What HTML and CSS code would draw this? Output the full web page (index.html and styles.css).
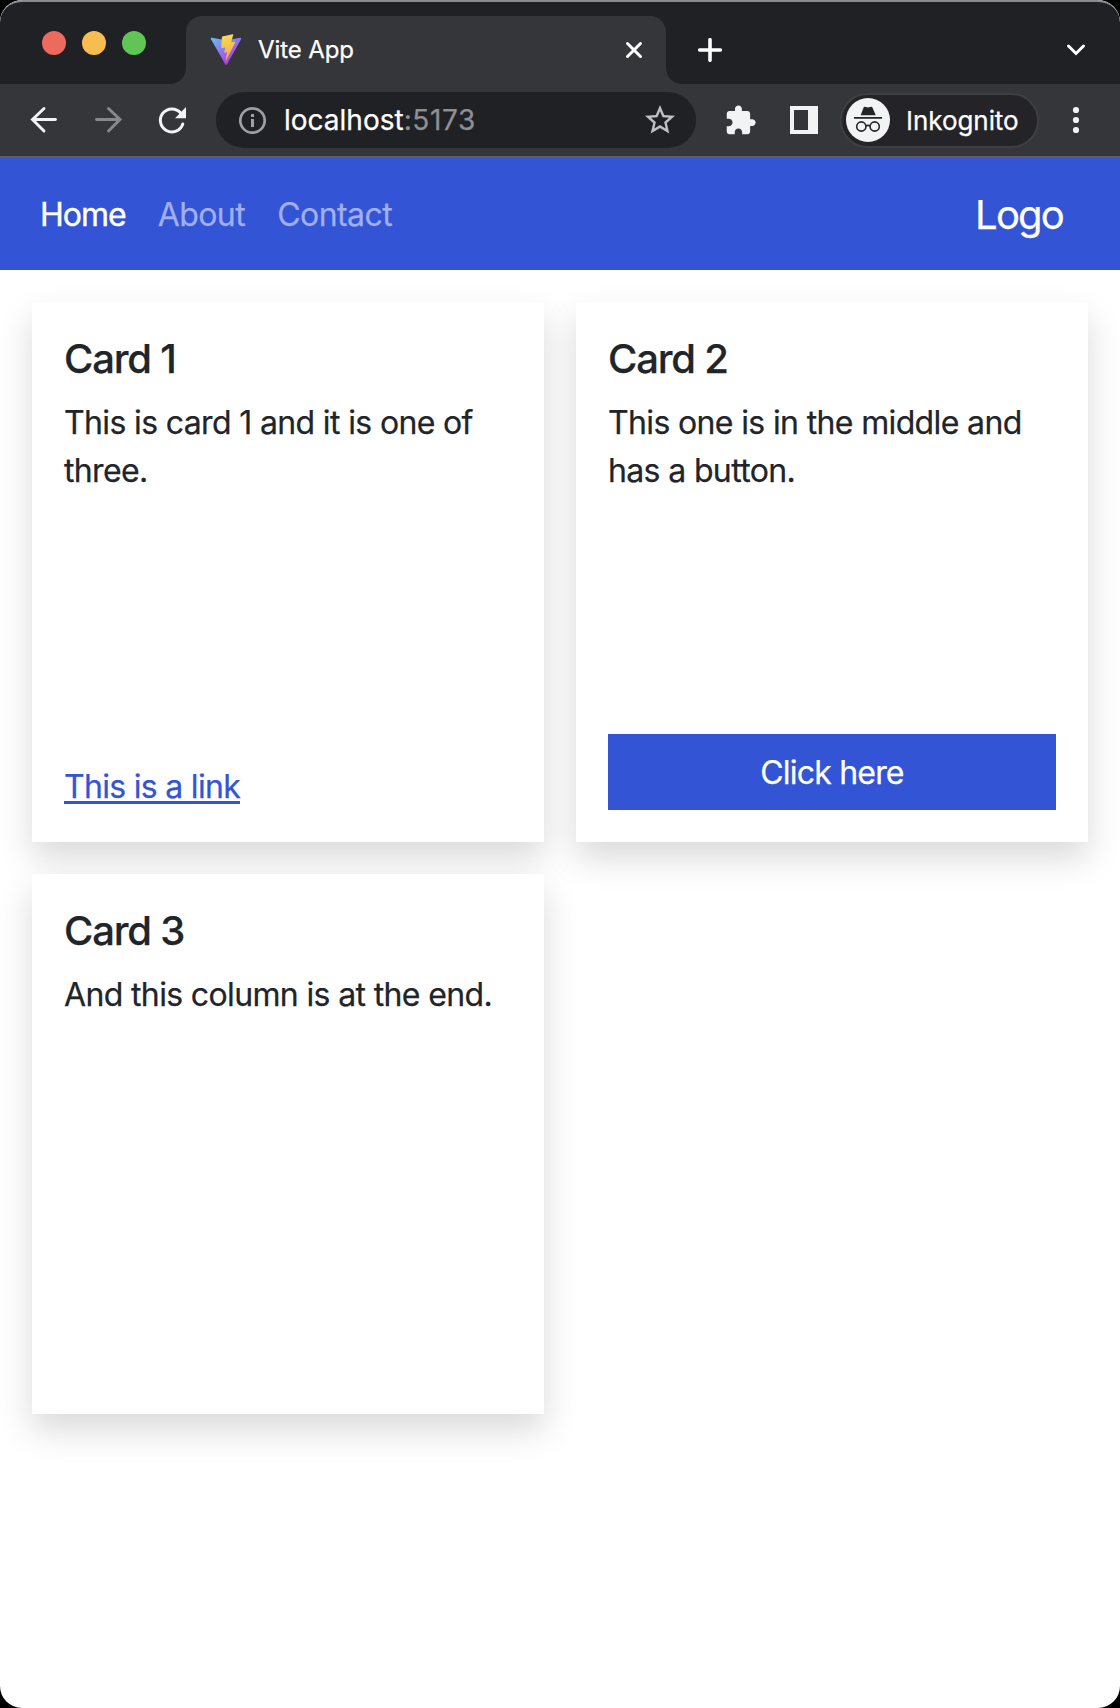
FILE: index.html
```html
<!DOCTYPE html>
<html lang="en">
<head>
<meta charset="utf-8">
<title>Vite App</title>
<link rel="stylesheet" href="styles.css">
</head>
<body>
<div class="window">
  <div class="tabstrip">
    <div class="lights"><span class="light red"></span><span class="light yellow"></span><span class="light green"></span></div>
    <div class="tab">
      <svg class="favicon" viewBox="0 0 410 404">
        <defs>
          <linearGradient id="shield" x1="6" y1="33" x2="235" y2="344" gradientUnits="userSpaceOnUse"><stop stop-color="#5fc4f5"/><stop offset="1" stop-color="#b044ea"/></linearGradient>
          <linearGradient id="bolt" x1="194.651" y1="8.818" x2="236.076" y2="292.989" gradientUnits="userSpaceOnUse"><stop stop-color="#f8e084"/><stop offset=".083" stop-color="#f9d657"/><stop offset="1" stop-color="#f3ae3d"/></linearGradient>
        </defs>
        <path fill="url(#shield)" d="M399.641 59.5246L215.643 388.545C211.844 395.338 202.084 395.378 198.228 388.618L10.5817 59.5563C6.38087 52.1896 12.6802 43.2665 21.0281 44.7586L205.223 77.6824C206.398 77.8924 207.601 77.8904 208.776 77.6763L389.119 44.8058C397.439 43.2894 403.768 52.1434 399.641 59.5246Z"/>
        <path fill="url(#bolt)" d="M292.965 1.5744L156.801 28.2552C154.563 28.6937 152.906 30.5903 152.771 32.8664L144.395 174.33C144.198 177.662 147.258 180.248 150.51 179.498L188.42 170.749C191.967 169.931 195.172 173.055 194.443 176.622L183.18 231.775C182.422 235.487 185.907 238.661 189.532 237.56L212.947 230.446C216.577 229.344 220.065 232.527 219.297 236.242L201.398 322.875C200.278 328.294 207.486 331.249 210.492 326.603L212.5 323.5L323.454 102.072C325.312 98.3645 322.108 94.137 318.036 94.9228L279.014 102.454C275.347 103.161 272.227 99.746 273.262 96.1583L298.731 7.86689C299.767 4.27314 296.636 0.855181 292.965 1.5744Z"/>
      </svg>
      <span class="tab-title">Vite App</span>
      <svg class="tab-close" viewBox="0 0 20 20"><path d="M3.5 3.5l13 13M16.5 3.5l-13 13" stroke="#fff" stroke-width="3" stroke-linecap="round"/></svg>
    </div>
    <svg class="new-tab" viewBox="0 0 24 24"><path d="M12 1.7v20.6M1.7 12h20.6" stroke="#fff" stroke-width="3.6" stroke-linecap="round"/></svg>
    <svg class="tab-search" viewBox="0 0 20 12"><path d="M2.5 2l7.5 7.5L17.500 2" fill="none" stroke="#fff" stroke-width="3" stroke-linecap="round"/></svg>
  </div>

  <div class="toolbar">
    <div class="nav-buttons">
      <svg viewBox="0 0 32 32" fill="none" stroke="#f1f3f4" stroke-width="2.9" stroke-linecap="round"><path d="M27.500 15.500H5M16 4.500L4.500 15.500L16 27"/></svg>
      <svg viewBox="0 0 32 32" fill="none" stroke="#88898c" stroke-width="2.9" stroke-linecap="round"><path d="M4.500 15.500H27M16.500 4.500L28 15.500L16.500 27"/></svg>
      <svg viewBox="0 0 32 32"><path d="M24.700 9A11.500 11.500 0 1 0 26.800 20" fill="none" stroke="#f1f3f4" stroke-width="3"  stroke-linecap="round"/><path d="M30 3v11.300H19z" fill="#f1f3f4"/></svg>
    </div>
    <div class="omnibox">
      <svg class="info" viewBox="0 0 28 28"><circle cx="14.500" cy="14.500" r="12.200" fill="none" stroke="#9aa0a6" stroke-width="2.700"/><path d="M13 13h3v8h-3zM13 8h3v3h-3z" fill="#9aa0a6"/></svg>
      <span class="url">localhost<span class="port">:5173</span></span>
      <svg class="star" viewBox="0 0 24 24"><path fill="#bfc0c3" d="M22 9.240l-7.190-.62L12 2 9.190 8.630 2 9.240l5.460 4.730L5.820 21 12 17.270 18.180 21l-1.630-7.030L22 9.240zM12 15.400l-3.760 2.270 1-4.280-3.320-2.880 4.380-.38L12 6.100l1.710 4.040 4.380.38-3.320 2.880 1 4.280L12 15.400z"/></svg>
    </div>
    <svg class="puzzle" viewBox="0 0 24 24"><path fill="#f1f3f4" d="M20.5 11H19V7c0-1.1-.9-2-2-2h-4V3.500C13 2.120 11.880 1 10.500 1S8 2.120 8 3.500V5H4c-1.100 0-1.990.9-1.990 2v3.800H3.500c1.490 0 2.700 1.210 2.700 2.700s-1.210 2.700-2.700 2.700H2V20c0 1.100.9 2 2 2h3.800v-1.500c0-1.490 1.210-2.700 2.700-2.700 1.490 0 2.700 1.210 2.700 2.700V22H17c1.100 0 2-.9 2-2v-4h1.500c1.380 0 2.500-1.120 2.500-2.500S21.880 11 20.500 11z"/></svg>
    <svg class="panel" viewBox="0 0 28 28"><path fill="#f1f3f4" fill-rule="evenodd" d="M0 0h28v28H0zM4 4v20h14V4z"/></svg>
    <div class="profile">
      <svg class="incognito" viewBox="0 0 44 44">
        <circle cx="22" cy="22" r="22" fill="#f1f3f4"/>
        <path fill="#242528" d="M14.700 17.300l3-8q.3-.8 1.200-.6l3.100.8 3.100-.8q.9-.2 1.200.6l3.500 8zM8 18.900h28v1.800H8z"/>
        <g fill="none" stroke="#242528" stroke-width="1.600"><circle cx="15.300" cy="28.500" r="4.600"/><circle cx="28.700" cy="28.500" r="4.600"/><path d="M19.800 27.900q2.200-1 4.400 0"/></g>
      </svg>
      <span class="profile-name">Inkognito</span>
    </div>
    <svg class="menu" viewBox="0 0 8 28" fill="#f1f3f4"><circle cx="4" cy="4" r="3.100"/><circle cx="4" cy="14" r="3.100"/><circle cx="4" cy="24" r="3.100"/></svg>
  </div>

  <nav class="navbar">
    <div class="links"><a class="link active">Home</a><a class="link">About</a><a class="link">Contact</a></div>
    <span class="brand">Logo</span>
  </nav>

  <main class="grid">
    <section class="card">
      <h5 class="card-title">Card 1</h5>
      <p class="card-text">This is card 1 and it is one of three.</p>
      <a class="card-link">This is a link</a>
    </section>
    <section class="card">
      <h5 class="card-title">Card 2</h5>
      <p class="card-text">This one is in the middle and has a button.</p>
      <button class="button">Click here</button>
    </section>
    <section class="card">
      <h5 class="card-title">Card 3</h5>
      <p class="card-text">And this column is at the end.</p>
    </section>
  </main>
</div>
</body>
</html>
```
FILE: styles.css
```css
* { box-sizing: border-box; }
body { margin: 0; background: #000; font-family: Inter, "Liberation Sans", sans-serif; color: #212529; -webkit-text-stroke: 0.25px currentColor; }
svg { display: block; flex: none; }
.window { height: 1708px; background: #fff; border-radius: 22px; overflow: hidden; }

.tabstrip { height: 84px; display: flex; align-items: flex-end; background: #202124; border-top: 2px solid #8a8b8d; border-radius: 22px 22px 0 0; }
.lights { width: 186px; height: 82px; padding: 29px 0 0 42px; display: flex; gap: 16px; }
.light { width: 24px; height: 24px; border-radius: 50%; }
.red { background: #ed6a5f; }
.yellow { background: #f6be50; }
.green { background: #61c555; }
.tab { position: relative; width: 480px; height: 68px; padding: 0 22px 0 24px; display: flex; align-items: center; background: #35363a; border-radius: 16px 16px 0 0; }
.tab::before, .tab::after { content: ""; position: absolute; bottom: 0; width: 16px; height: 16px; }
.tab::before { left: -16px; background: radial-gradient(circle at 0 0, transparent 15.5px, #35363a 16.5px); }
.tab::after { right: -16px; background: radial-gradient(circle at 100% 0, transparent 15.5px, #35363a 16.5px); }
.favicon { width: 32px; height: 32px; }
.tab-title { flex: 1; padding-left: 16px; font-size: 24px; line-height: 30px; color: #fff; letter-spacing: -0.1px; }
.tab-close { width: 20px; height: 20px; }
.new-tab { width: 24px; height: 24px; margin: 0 0 22px 32px; }
.tab-search { width: 20px; height: 12px; margin: 0 34px 28px auto; }

.toolbar { height: 74px; padding: 0 40px 0 28px; display: flex; align-items: center; background: #35363a; border-bottom: 2px solid #5e5d62; }
.nav-buttons { display: flex; gap: 32px; }
.nav-buttons svg { width: 32px; height: 32px; }
.omnibox { width: 480px; height: 56px; margin-left: 28px; padding: 0 18px 0 22px; display: flex; align-items: center; background: #202124; border-radius: 28px; }
.info { width: 28px; height: 28px; }
.url { flex: 1; padding-left: 18px; font-size: 28px; line-height: 36px; color: #fff; letter-spacing: 0; }
.port { color: #8f9093; letter-spacing: 0.6px; }
.star { width: 36px; height: 36px; }
.puzzle { width: 33px; height: 33px; margin-left: 28px; }
.panel { width: 28px; height: 28px; margin-left: 33px; }
.profile { width: 199px; height: 55px; margin-left: 22px; padding-left: 4px; display: flex; align-items: center; gap: 16px; background: #242328; border: 2px solid #3f3e43; border-radius: 28px; }
.incognito { width: 44px; height: 44px; }
.profile-name { padding-top: 2px; font-size: 26px; line-height: 32px; color: #fff; letter-spacing: -0.05px; }
.menu { width: 8px; height: 28px; margin-left: auto; }

.navbar { height: 112px; padding: 2px 57px 0 40px; display: flex; align-items: center; justify-content: space-between; background: #3354d4; }
.links { display: flex; gap: 32px; }
.link { font-size: 32px; line-height: 48px; color: #a0aff0; letter-spacing: -0.55px; }
.active { color: #fff; letter-spacing: -1px; -webkit-text-stroke-width: 0.4px; }
.brand { font-size: 40px; line-height: 60px; color: #fff; letter-spacing: -1.8px; }

.grid { padding: 32px; display: grid; grid-template-columns: 1fr 1fr; grid-auto-rows: 540px; gap: 32px; }
.card { padding: 33px 32px 31px; display: flex; flex-direction: column; align-items: flex-start; background: #fff; box-shadow: 0 16px 32px rgba(0, 0, 0, .15); }
.card-title { margin: 0 0 16px; font-size: 40px; line-height: 48px; font-weight: 500; letter-spacing: -1.2px; }
.card-text { margin: 0 0 auto; font-size: 32px; line-height: 48px; letter-spacing: -0.64px; }
.card-link { font-size: 32px; line-height: 48px; color: #3354d4; letter-spacing: -0.7px; text-decoration: underline; text-decoration-thickness: 3px; text-underline-offset: 3px; text-decoration-skip-ink: none; }
.button { width: 100%; height: 76px; margin-bottom: 1px; padding: 2px 0 0; border: 0; background: #3354d4; color: #fff; font: 400 32px/48px Inter, "Liberation Sans", sans-serif; letter-spacing: -0.8px; }
```
